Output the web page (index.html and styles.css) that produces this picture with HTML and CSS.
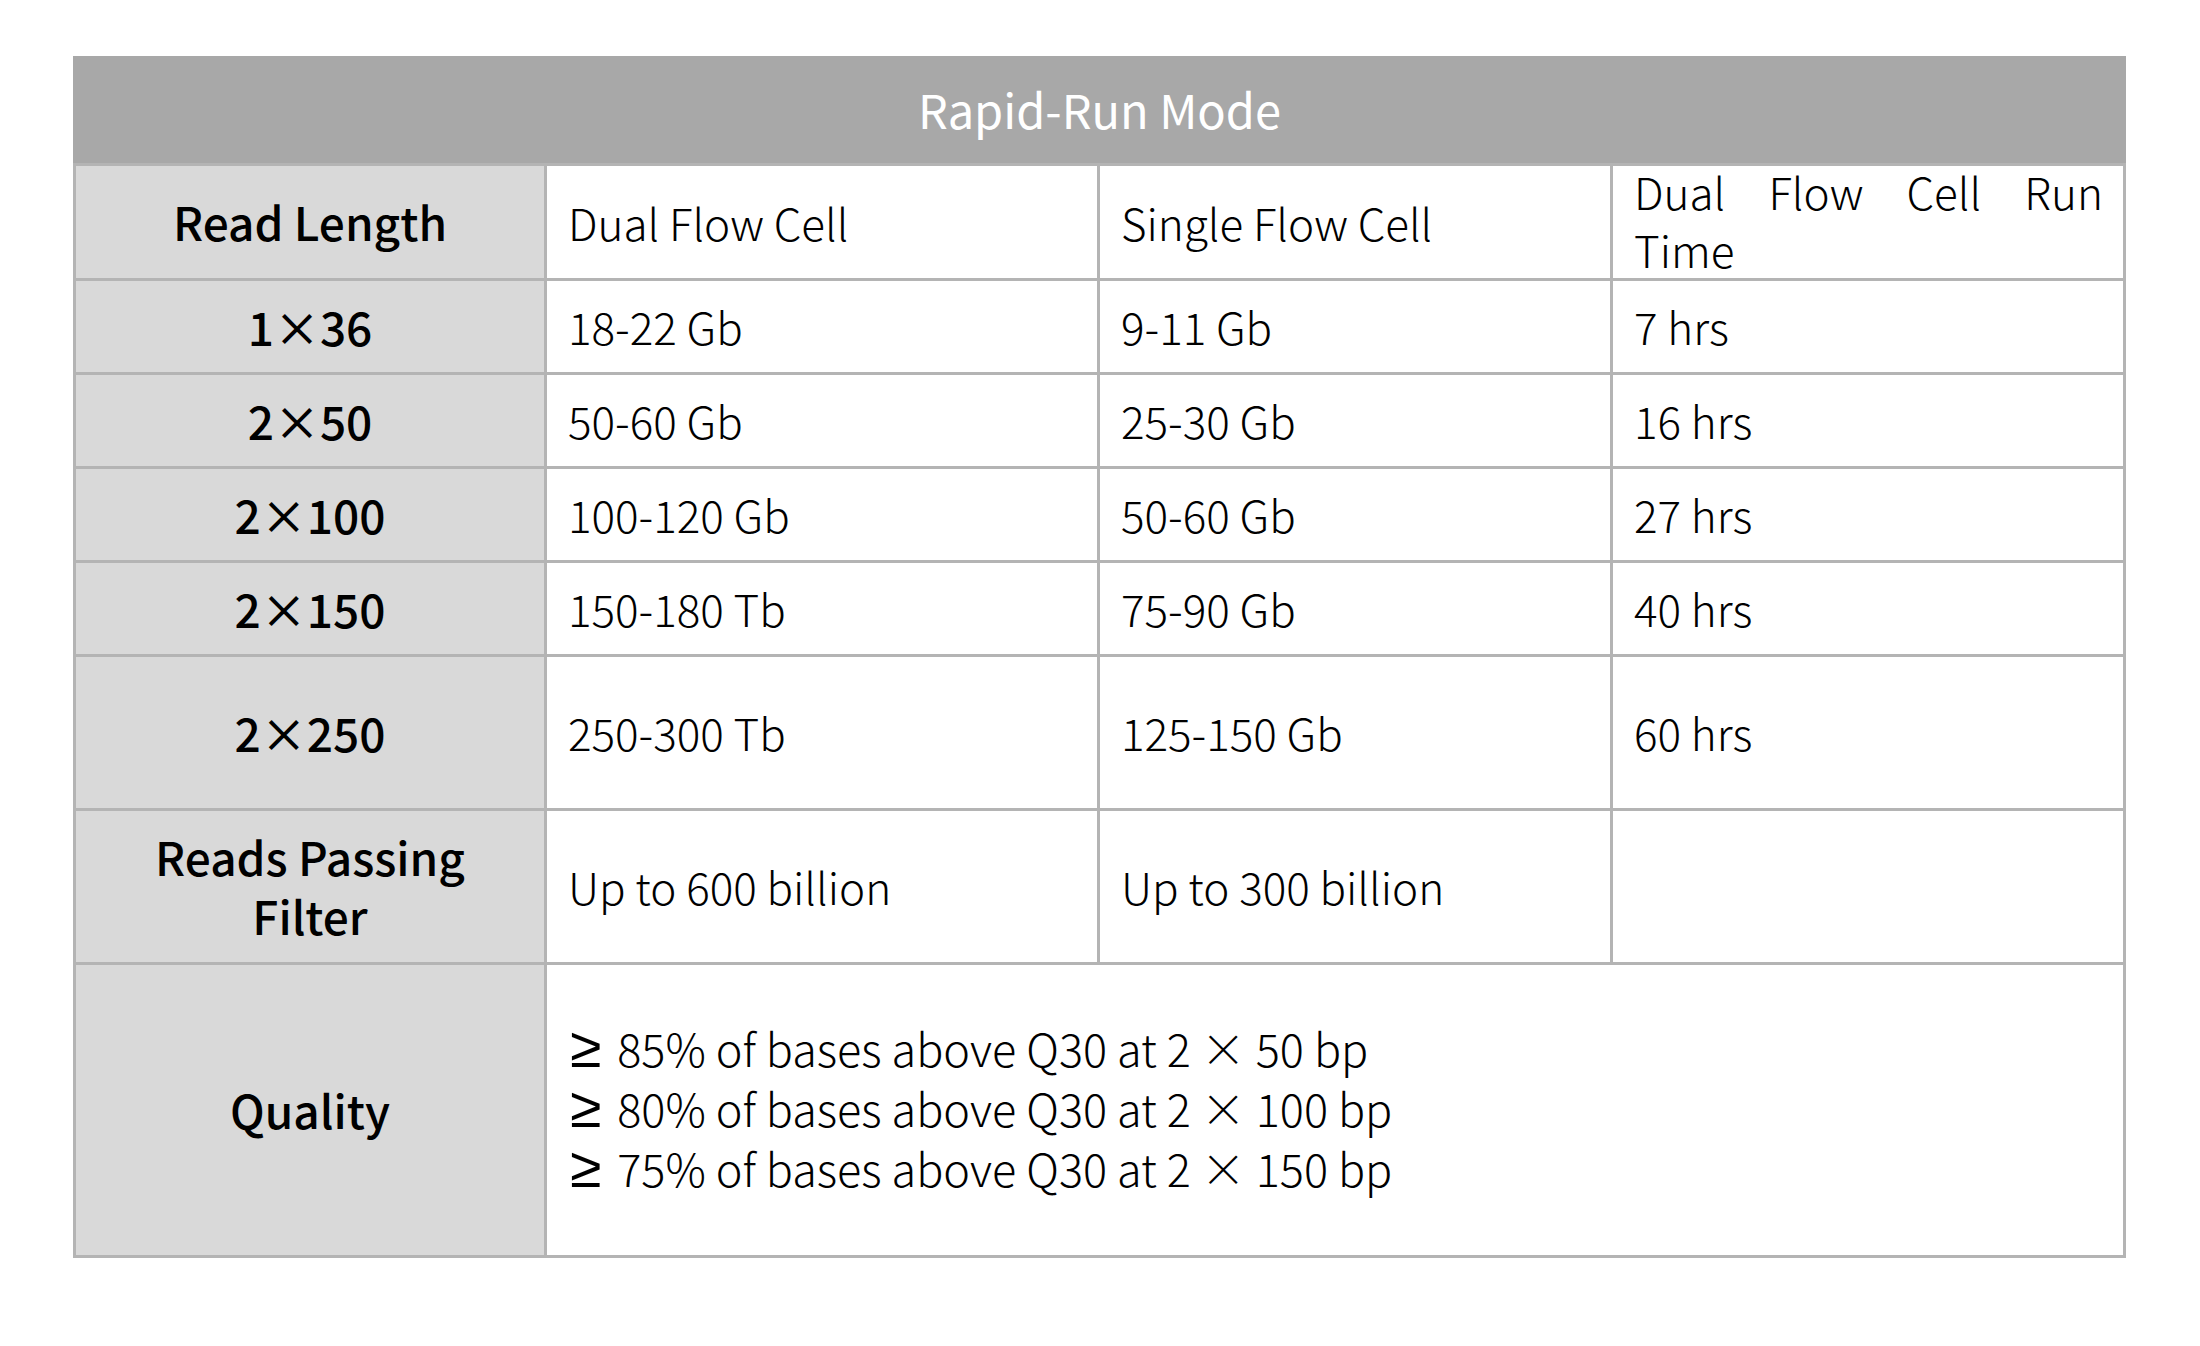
FILE: index.html
```html
<!DOCTYPE html>
<html lang="en">
<head>
<meta charset="utf-8">
<title>Rapid-Run Mode</title>
<link rel="stylesheet" href="styles.css">
</head>
<body>
<table class="spec">
  <colgroup>
    <col class="c1"><col class="c2"><col class="c3"><col class="c4">
  </colgroup>
  <thead>
    <tr class="r-title"><th colspan="4" class="title">Rapid-Run Mode</th></tr>
  </thead>
  <tbody>
    <tr class="r-head">
      <th class="lab">Read Length</th>
      <td>Dual Flow Cell</td>
      <td>Single Flow Cell</td>
      <td class="just"><div class="just-text">Dual Flow Cell Run Time</div></td>
    </tr>
    <tr class="r-std">
      <th class="lab">1×36</th>
      <td>18-22 Gb</td>
      <td>9-11 Gb</td>
      <td>7 hrs</td>
    </tr>
    <tr class="r-std">
      <th class="lab">2×50</th>
      <td>50-60 Gb</td>
      <td>25-30 Gb</td>
      <td>16 hrs</td>
    </tr>
    <tr class="r-std">
      <th class="lab">2×100</th>
      <td>100-120 Gb</td>
      <td>50-60 Gb</td>
      <td>27 hrs</td>
    </tr>
    <tr class="r-std">
      <th class="lab">2×150</th>
      <td>150-180 Tb</td>
      <td>75-90 Gb</td>
      <td>40 hrs</td>
    </tr>
    <tr class="r-tall">
      <th class="lab">2×250</th>
      <td>250-300 Tb</td>
      <td>125-150 Gb</td>
      <td>60 hrs</td>
    </tr>
    <tr class="r-tall">
      <th class="lab"><div class="lab-line">Reads Passing</div><div class="lab-line">Filter</div></th>
      <td>Up to 600 billion</td>
      <td>Up to 300 billion</td>
      <td></td>
    </tr>
    <tr class="r-quality">
      <th class="lab">Quality</th>
      <td colspan="3" class="quality"><div><span class="ge">≥</span> 85% of bases above Q30 at 2 × 50 bp</div><div><span class="ge">≥</span> 80% of bases above Q30 at 2 × 100 bp</div><div><span class="ge">≥</span> 75% of bases above Q30 at 2 × 150 bp</div></td>
    </tr>
  </tbody>
</table>
</body>
</html>
```

FILE: styles.css
```css
html, body {
  margin: 0;
  background: #ffffff;
}
body {
  padding: 56px 72px 0 73px;
  font-family: "Noto Sans CJK SC", "Noto Sans", sans-serif;
  color: #000000;
}
.spec {
  border-collapse: collapse;
  table-layout: fixed;
  width: 2050px;
  font-size: 44px;
  line-height: 60px;
}
.c1 { width: 471px; }
.c2 { width: 553px; }
.c3 { width: 513px; }
.c4 { width: 513px; }

.spec th, .spec td {
  border: 3px solid #b4b4b4;
  padding: 0 20px 0 21px;
  vertical-align: middle;
  text-align: left;
  font-weight: 300;
}
.spec th.title {
  background: #a8a8a8;
  color: #ffffff;
  text-align: center;
  font-size: 47px;
  font-weight: 400;
  padding: 0;
  border-top: none;
  border-left-color: #a8a8a8;
  border-right-color: #a8a8a8;
}
.r-title { height: 108px; }
.r-head { height: 114px; }
.r-std { height: 94px; }
.r-tall { height: 154px; }
.r-quality { height: 293px; }

.spec th.lab {
  background: #d9d9d9;
  text-align: center;
  font-size: 46px;
  line-height: 59px;
  font-weight: 500;
  padding: 0 10px;
}
.lab-line {
  height: 59px;
  overflow: visible;
}
.spec td.just {
  vertical-align: top;
}
.just-text {
  text-align: justify;
  line-height: 58px;
  margin-top: -4px;
}
.spec td.quality {
  font-size: 45px;
  padding-bottom: 3px;
}
.ge {
  font-family: "Liberation Sans", sans-serif;
  font-size: 57px;
  font-weight: 400;
  line-height: 0;
  margin-left: 2px;
  margin-right: 6px;
}
```
